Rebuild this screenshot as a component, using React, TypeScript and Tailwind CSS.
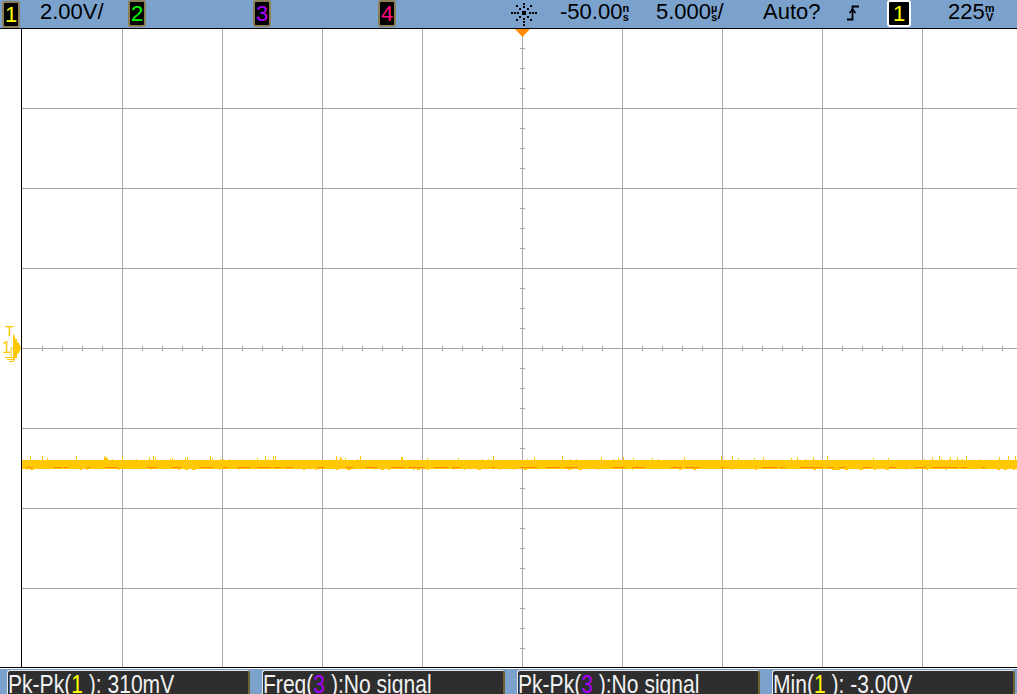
import React from "react";

function rng(seed: number) {
  let s = seed;
  return () => {
    s = (s * 1103515245 + 12345) % 2147483648;
    return s / 2147483648;
  };
}

const ChanBox = ({ n, color, white }: { n: string; color: string; white?: boolean }) => (
  <div
    className={`flex h-[27px] items-center justify-center rounded-[3px] bg-black ${
      white ? "w-[24px] border-2 border-white" : "w-[18px] border-2 border-[#8c7f55]"
    }`}
  >
    <span className="text-[22px] leading-[22px]" style={{ color }}>
      {n}
    </span>
  </div>
);

const Stack = ({ a, b }: { a: string; b: string }) => (
  <span className="mt-[4px] inline-flex flex-col items-center align-top text-[11px] font-bold leading-[9px]">
    <span>{a}</span>
    <span>{b}</span>
  </span>
);

const TrigIcon = () => {
  const pts: [number, number][] = [
    [15, 13],
    [9, 13], [6, 13], [3, 13], [21, 13], [24, 13], [27, 13],
    [15, 7], [15, 4],
    [15, 19], [15, 22], [15, 25],
    [11, 9], [8, 6], [19, 9], [22, 6],
    [11, 17], [8, 20], [19, 17], [22, 20],
  ];
  return (
    <svg width="30" height="28" viewBox="0 0 30 28">
      {pts.map(([x, y], i) => (
        <rect key={i} x={x - 1} y={y - 1} width="2" height="2" fill="#000" />
      ))}
      <rect x="13" y="11" width="4" height="4" fill="#000" />
    </svg>
  );
};

const EdgeIcon = () => (
  <svg width="12" height="28" viewBox="0 0 12 28">
    <path d="M0 19.5 H5.5 V6.5 H12" stroke="#000" strokeWidth="1.8" fill="none" />
    <path d="M2.5 13 L5.5 9.5 L8.5 13" stroke="#000" strokeWidth="1.8" fill="none" />
  </svg>
);

const Display = () => {
  const vlines = [122, 222, 322, 422, 622, 722, 822, 922];
  const hlines = [108, 188, 268, 428, 508, 588];
  const hticks: number[] = [];
  for (let x = 42; x < 1017; x += 20) if ((x - 22) % 100 !== 0) hticks.push(x);
  const vticks: number[] = [];
  for (let y = 48; y < 668; y += 20) if ((y - 28) % 80 !== 0) vticks.push(y);

  const r = rng(7);
  const spikes: { x: number; h: number }[] = [];
  const orange: { x: number; w: number }[] = [];
  const gaps: { x: number; w: number }[] = [];
  for (let x = 22; x < 1017; x++) {
    const v = r();
    if (v < 0.08) spikes.push({ x, h: 1 + Math.floor(r() * 4) });
    const o = r();
    if (o < 0.06) orange.push({ x, w: 3 + Math.floor(r() * 12) });
    const g = r();
    if (g < 0.05) gaps.push({ x, w: 1 + Math.floor(r() * 3) });
  }

  return (
    <svg width="1017" height="641" viewBox="0 28 1017 641" className="block">
      <rect x="0" y="28" width="1017" height="641" fill="#fff" />
      {vlines.map((x) => (
        <line key={"v" + x} x1={x + 0.5} y1="29" x2={x + 0.5} y2="668" stroke="#a8a8a8" strokeWidth="1" />
      ))}
      {hlines.map((y) => (
        <line key={"h" + y} x1="22" y1={y + 0.5} x2="1017" y2={y + 0.5} stroke="#a8a8a8" strokeWidth="1" />
      ))}
      <line x1="22" y1="348.5" x2="1017" y2="348.5" stroke="#a8a8a8" strokeWidth="1" />
      <line x1="522.5" y1="29" x2="522.5" y2="668" stroke="#a8a8a8" strokeWidth="1" />
      {hticks.map((x) => (
        <line key={"ht" + x} x1={x + 0.5} y1="346" x2={x + 0.5} y2="351" stroke="#a8a8a8" strokeWidth="1" />
      ))}
      {vticks.map((y) => (
        <line key={"vt" + y} x1="520" y1={y + 0.5} x2="525" y2={y + 0.5} stroke="#a8a8a8" strokeWidth="1" />
      ))}
      {/* trace */}
      {spikes.map((s, i) => (
        <rect key={"s" + i} x={s.x} y={460 - s.h} width="1" height={s.h} fill="#ffc800" />
      ))}
      <rect x="22" y="460" width="995" height="9" fill="#ffc800" />
      {orange.map((o, i) => (
        <rect key={"o" + i} x={o.x} y="467" width={o.w} height="1" fill="#ff8a00" />
      ))}
      {gaps.map((g, i) => (
        <rect key={"g" + i} x={g.x} y="469" width={g.w} height="1" fill="#ffc800" />
      ))}
      {/* borders */}
      <line x1="0" y1="28.5" x2="1017" y2="28.5" stroke="#000" strokeWidth="1" />
      <line x1="0" y1="667.5" x2="1017" y2="667.5" stroke="#000" strokeWidth="1" />
      <line x1="21.5" y1="29" x2="21.5" y2="667" stroke="#000" strokeWidth="1" />
      {/* trigger position marker */}
      <polygon points="515,29 530,29 522.5,37" fill="#ff8c00" />
      {/* left markers */}
      <text x="5" y="336" fontFamily="Liberation Sans, sans-serif" fontSize="15" fill="#ffc800">T</text>
      <text x="2" y="353" fontFamily="Liberation Sans, sans-serif" fontSize="16" fill="#ffc800">1</text>
      <polygon points="13,334 15,336 15,339 17,339 17,342 19,343 21,348 19,353 17,354 17,357 15,357 15,360 13,362" fill="#ffc800" />
      <path d="M13 348 H11 V357" stroke="#ffc800" strokeWidth="1" fill="none" />
      <line x1="5" y1="357.5" x2="17" y2="357.5" stroke="#ffc800" />
      <line x1="7" y1="359.5" x2="15" y2="359.5" stroke="#ffc800" />
      <line x1="9" y1="361.5" x2="13" y2="361.5" stroke="#ffc800" />
    </svg>
  );
};

const MeasBox = ({ children }: { children: React.ReactNode }) => (
  <div className="mt-[1px] h-[30px] w-[243px] overflow-hidden rounded-t-[3px] border-l border-t border-r-2 border-l-[#e6e6e6] border-t-[#e6e6e6] border-r-[#6e6232] bg-[#2e2e2e]">
    <div className="origin-left scale-x-[0.81] whitespace-nowrap text-[26px] leading-[26px] text-[#f2f2f2]">
      {children}
    </div>
  </div>
);

export default function App() {
  const font = { fontFamily: '"Liberation Sans", Arial, sans-serif' };
  return (
    <div className="flex h-[694px] w-[1017px] flex-col overflow-hidden bg-white" style={font}>
      <div className="flex h-[28px] shrink-0 items-start bg-[#7ba1cd] text-[22px] leading-[24px] text-black">
        <div className="ml-[2px] mt-[1px]"><ChanBox n="1" color="#ffff00" /></div>
        <div className="ml-[20px] w-[66px] whitespace-nowrap">2.00V/</div>
        <div className="ml-[22px]"><ChanBox n="2" color="#00ff00" /></div>
        <div className="ml-[107px]"><ChanBox n="3" color="#b000ff" /></div>
        <div className="ml-[107px]"><ChanBox n="4" color="#ff0a78" /></div>
        <div className="ml-[113px]"><TrigIcon /></div>
        <div className="ml-[21px] w-[70px] whitespace-nowrap">-50.00<Stack a="n" b="s" /></div>
        <div className="ml-[26px] w-[76px] whitespace-nowrap">5.000<Stack a="µ" b="s" />/</div>
        <div className="ml-[31px] w-[58px] whitespace-nowrap">Auto?</div>
        <div className="ml-[26px]"><EdgeIcon /></div>
        <div className="ml-[28px]"><ChanBox n="1" color="#ffff00" white /></div>
        <div className="ml-[37px] w-[50px] whitespace-nowrap">225<Stack a="m" b="V" /></div>
      </div>
      <Display />
      <div className="flex h-[25px] shrink-0 items-start gap-[12px] bg-[#7ba1cd] pl-[7px]">
        <MeasBox>
          Pk-Pk(<span className="text-[#ffff00]">1</span> ): 310mV
        </MeasBox>
        <MeasBox>
          Freq(<span className="text-[#a800ff]">3</span> ):No signal
        </MeasBox>
        <MeasBox>
          Pk-Pk(<span className="text-[#a800ff]">3</span> ):No signal
        </MeasBox>
        <MeasBox>
          Min(<span className="text-[#ffff00]">1</span> ): -3.00V
        </MeasBox>
      </div>
    </div>
  );
}
